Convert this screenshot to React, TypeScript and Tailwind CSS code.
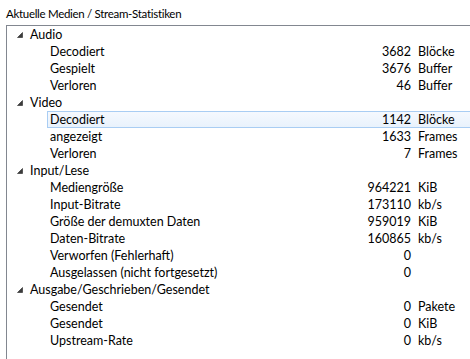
type Item = { label: string; value?: string; unit?: string; selected?: boolean }
type Group = { title: string; items: Item[] }

const groups: Group[] = [
  {
    title: 'Audio',
    items: [
      { label: 'Decodiert', value: '3682', unit: 'Blöcke' },
      { label: 'Gespielt', value: '3676', unit: 'Buffer' },
      { label: 'Verloren', value: '46', unit: 'Buffer' },
    ],
  },
  {
    title: 'Video',
    items: [
      { label: 'Decodiert', value: '1142', unit: 'Blöcke', selected: true },
      { label: 'angezeigt', value: '1633', unit: 'Frames' },
      { label: 'Verloren', value: '7', unit: 'Frames' },
    ],
  },
  {
    title: 'Input/Lese',
    items: [
      { label: 'Mediengröße', value: '964221', unit: 'KiB' },
      { label: 'Input-Bitrate', value: '173110', unit: 'kb/s' },
      { label: 'Größe der demuxten Daten', value: '959019', unit: 'KiB' },
      { label: 'Daten-Bitrate', value: '160865', unit: 'kb/s' },
      { label: 'Verworfen (Fehlerhaft)', value: '0' },
      { label: 'Ausgelassen (nicht fortgesetzt)', value: '0' },
    ],
  },
  {
    title: 'Ausgabe/Geschrieben/Gesendet',
    items: [
      { label: 'Gesendet', value: '0', unit: 'Pakete' },
      { label: 'Gesendet', value: '0', unit: 'KiB' },
      { label: 'Upstream-Rate', value: '0', unit: 'kb/s' },
    ],
  },
]

function Arrow() {
  return (
    <svg width="6" height="6" viewBox="0 0 6 6" className="shrink-0">
      <polygon points="5.5,0.5 5.5,5.5 0.5,5.5" fill="#3c3c3c" stroke="#262626" strokeWidth="0.6" />
    </svg>
  )
}

export default function App() {
  return (
    <div
      className="w-[470px] h-[359px] overflow-hidden bg-white text-[12.5px] text-black"
      style={{ fontFamily: 'Lato, "Noto Sans", sans-serif' }}
    >
      <div className="h-[25px] pl-[6px] pt-[6px] leading-[16px] text-[11.5px] tracking-[-0.3px]">
        Aktuelle Medien / Stream-Statistiken
      </div>

      <div className="ml-[6px] w-[480px] h-[334px] border-l border-t border-[#828790]">
        {groups.map(g => (
          <div key={g.title}>
            <div className="h-[17px] flex items-center">
              <div className="w-[23px] pl-[10px] flex items-center">
                <Arrow />
              </div>
              <span className="leading-[16px]">{g.title}</span>
            </div>
            {g.items.map((it, i) => (
              <div key={i} className="h-[17px] flex pl-[40px]">
                <div
                  className={`flex-1 flex items-center pl-[2px] border ${
                    it.selected
                      ? 'border-[#a9cdf3] bg-gradient-to-b from-[#f5f9fe] to-[#e9f2fc]'
                      : 'border-transparent'
                  }`}
                >
                  <span className="w-[301px] leading-[15px] whitespace-nowrap">{it.label}</span>
                  <span className="w-[60px] text-right leading-[15px]">{it.value}</span>
                  <span className="ml-[7px] leading-[15px]">{it.unit}</span>
                </div>
              </div>
            ))}
          </div>
        ))}
      </div>
    </div>
  )
}
